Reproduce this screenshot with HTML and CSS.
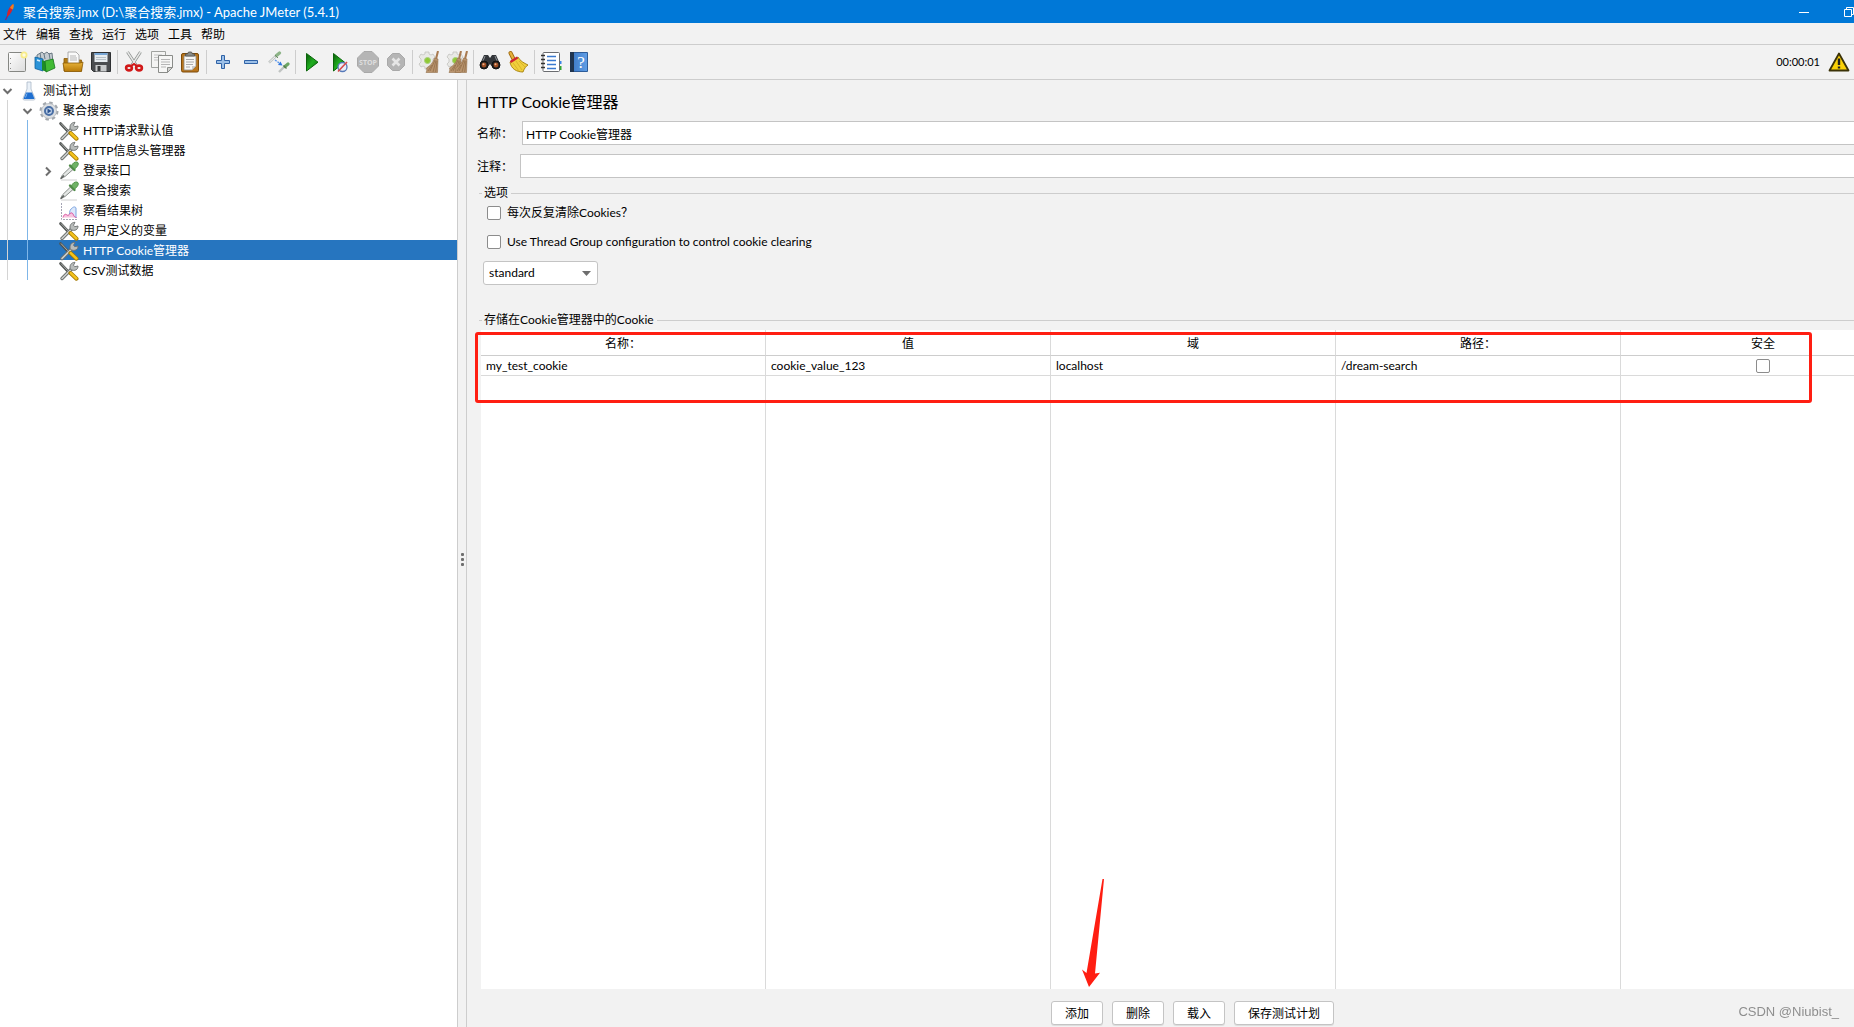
FILE: index.html
```html
<!DOCTYPE html>
<html lang="zh-CN">
<head>
<meta charset="utf-8">
<meta name="viewport" content="width=device-width, initial-scale=1">
<title>聚合搜索.jmx - Apache JMeter (5.4.1)</title>
<link rel="stylesheet" href="styles.css">
</head>
<body>
<svg class="defs" aria-hidden="true">
  <defs>
    <linearGradient id="g-green" x1="0" y1="0" x2="1" y2="1"><stop offset="0" stop-color="#0b5a0b"/><stop offset=".5" stop-color="#1fae1f"/><stop offset="1" stop-color="#0a6a0a"/></linearGradient>
    <linearGradient id="g-gold" x1="0" y1="0" x2="0" y2="1"><stop offset="0" stop-color="#e9b53c"/><stop offset="1" stop-color="#b87a08"/></linearGradient>
    <linearGradient id="g-paper" x1="0" y1="0" x2="1" y2="1"><stop offset="0" stop-color="#ffffff"/><stop offset="1" stop-color="#dcdcdc"/></linearGradient>
    <linearGradient id="g-blue" x1="0" y1="0" x2="1" y2="0"><stop offset="0" stop-color="#3a76c4"/><stop offset="1" stop-color="#5f9ee6"/></linearGradient>
    <symbol id="i-tools" viewBox="0 0 20 20">
      <path d="M1.500 2.500l9 9.500" stroke="#4f5351" stroke-width="2.600" stroke-linecap="round"/>
      <path d="M2 2.500l8 8.500" stroke="#b9bcba" stroke-width=".9"/>
      <path d="M3 17.500L13 7.500" stroke="#6d716f" stroke-width="3.400" stroke-linecap="round"/>
      <path d="M3 17.500L13 7.500" stroke="#cfd2d0" stroke-width="1.500" stroke-linecap="round"/>
      <path d="M11.500 8.500c-1.500-3.500.5-7.200 4.500-7.200l-1.500 2.900 1.200 1.500 3.300-.7c.2 3.500-3 5.700-7.500 3.500z" fill="#b9bdbb" stroke="#6d716f" stroke-width=".9"/>
      <path d="M11.500 12l6 5.700" stroke="#a47900" stroke-width="4" stroke-linecap="round"/>
      <path d="M11.800 12.200l5.600 5.300" stroke="#f4c21c" stroke-width="2.500" stroke-linecap="round"/>
    </symbol>
    <symbol id="i-dropper" viewBox="0 0 20 20">
      <path d="M2 19h16" stroke="#d0d0d0"/>
      <path d="M1.500 17.800l2-4L11.500 6l2.500 2.500-8 7z" fill="#e4e7e5" stroke="#7d827f" stroke-width=".9"/>
      <path d="M2 17.500l3-3" stroke="#5b5f5d" stroke-width="1.500"/>
      <path d="M11 4.500l4.500 4.500" stroke="#4f8a47" stroke-width="2.400" stroke-linecap="round"/>
      <path d="M12.500 5c.7-2.500 3.200-4.500 5.500-4 2.300.7 1.700 4-2.500 7.200z" fill="#6fb265" stroke="#4b8f43" stroke-width=".9"/>
    </symbol>
    <symbol id="i-gear" viewBox="0 0 22 22">
      <path d="M7 1h4v2l2 1 2-1 2 3-2 2v3l2 2-3 3-2-1-2 1v2H7v-2l-2-1-2 1-2-3 2-2V8L1 6l2-3 2 1 2-1z" fill="#e9e9e6" stroke="#c2c2be" stroke-width=".8"/>
      <circle cx="9.500" cy="9.500" r="3" fill="#8fca35" stroke="#a9cf7c"/>
    </symbol>
    <symbol id="i-besom" viewBox="0 0 22 22">
      <path d="M20 0l-2.500 10" stroke="#a87a50" stroke-width="2"/>
      <path d="M16.500 7l3.500 1-.5 13.500H8c1-2 1-3 .5-4.500C12 15 15 12 16.500 7z" fill="#b9946e" stroke="#94714b" stroke-width=".6"/>
      <path d="M17 9l-5 11M18 9.500L15 21M19 10l-1.300 11M14 14l-4 6" stroke="#8d6a45" stroke-width=".7"/>
    </symbol>
  </defs>
</svg>

<header class="titlebar">
  <svg class="feather" viewBox="0 0 14 18" fill="none" aria-hidden="true"><path d="M2.500 17l2-4" stroke="#7a2a7a" stroke-width="1.400"/><path d="M4 14c-.5-4 1.500-10 6-13 .8 4-1.500 10-6 13z" fill="#d3232f"/><path d="M7 5c1-2 2-3.500 3.500-4 .5 1.700.2 3.600-.6 5.500z" fill="#f2801e"/></svg>
  <h1 class="title">聚合搜索.jmx (D:\聚合搜索.jmx) - Apache JMeter (5.4.1)</h1>
  <div class="window-controls">
    <button type="button" aria-label="最小化"><svg viewBox="0 0 10 10"><path d="M0 5.500h10" stroke="#fff"/></svg></button>
    <button type="button" aria-label="还原"><svg viewBox="0 0 10 10" fill="none" stroke="#fff"><path d="M.5 2.500h7v7h-7zM2.500 2V.5h7v7H8"/></svg></button>
  </div>
</header>

<nav class="menubar">
  <button type="button">文件</button><button type="button">编辑</button><button type="button">查找</button><button type="button">运行</button><button type="button">选项</button><button type="button">工具</button><button type="button">帮助</button>
</nav>

<div class="toolbar" role="toolbar">
  <button type="button" aria-label="新建"><svg viewBox="0 0 22 22"><rect x="2.500" y="1.500" width="17" height="19" rx="1" fill="url(#g-paper)" stroke="#858783"/><path d="M4.500 7v1M4.500 12v1M4.500 17v1" stroke="#888"/><circle cx="18" cy="4" r="3.500" fill="#f8ec8a"/><circle cx="18" cy="4" r="1.700" fill="#fffbe0"/></svg></button>
  <button type="button" aria-label="模板"><svg viewBox="0 0 22 22"><path d="M3 4l5-3 2 2 3-2 2 2 3-1 1 9H3z" fill="#c4cbd0" stroke="#52626e" stroke-width=".8"/><path d="M6 2l1 6M10 3l1 5M15 2l1 6" stroke="#667985"/><path d="M1 6l8 2v12l-8-2.500z" fill="#2b93d8" stroke="#0c5f9e" stroke-width=".8"/><path d="M8 9l5 2v10l-5-2z" fill="#1d8d28"/><path d="M11 10l8-2 2 9-9 4z" fill="#42bb35" stroke="#16761d" stroke-width=".8"/><path d="M3 9l3 1" stroke="#d8eefc" stroke-width="1.500"/></svg></button>
  <button type="button" aria-label="打开"><svg viewBox="0 0 22 22"><path d="M2 10V7.500h5l1 1.500h11.500v11H2z" fill="#b07a14" stroke="#8a5b06" stroke-width=".8"/><path d="M6 1h8l3 3v9H6z" fill="#fafafa" stroke="#999" stroke-width=".8"/><path d="M8 5h6M8 7h7M8 9h7" stroke="#b5b5b5"/><path d="M1 12h17l3-1-1.500 9.500h-17z" fill="url(#g-gold)" stroke="#8a5b06" stroke-width=".8"/></svg></button>
  <button type="button" aria-label="保存"><svg viewBox="0 0 22 22"><path d="M1.500 1.500h19v19h-17l-2-2z" fill="#4a4d50" stroke="#2e3032"/><path d="M4.500 2h13v9h-13z" fill="#e6ecf0"/><path d="M4.500 2h13v2h-13z" fill="#76a5d4"/><path d="M6 6.500h10M6 8.500h10" stroke="#b7c0c6"/><path d="M5.500 14h11v6.500h-11z" fill="#c8cbcc"/><path d="M7.500 15h3v5h-3z" fill="#3a3c3e"/></svg></button>
  <span class="sep"></span>
  <button type="button" aria-label="剪切"><svg viewBox="0 0 22 22" fill="none"><path d="M4.500 1l8.500 13M17.500 1L9 14" stroke="#8b8f8d" stroke-width="3"/><path d="M4.500 1l8.500 13M17.500 1L9 14" stroke="#e8e9e8" stroke-width="1.400"/><ellipse cx="6" cy="17" rx="2.900" ry="2.400" stroke="#d11919" stroke-width="2.600"/><ellipse cx="16" cy="17" rx="2.900" ry="2.400" stroke="#d11919" stroke-width="2.600"/><path d="M8 15l3-2 3 2" stroke="#d11919" stroke-width="2"/></svg></button>
  <button type="button" aria-label="复制"><svg viewBox="0 0 22 22"><path d="M.5.500h14v16H.5z" fill="#f4f4f3" stroke="#a0a29f"/><path d="M3 4h8M3 6.500h8M3 9h4" stroke="#c2c2c2"/><path d="M7.500 4.500h14v12l-5 5h-9z" fill="#f6f6f5" stroke="#8a8c89"/><path d="M10 8.500h9M10 11h9M10 13.500h9M10 16h5" stroke="#b5b5b5"/><path d="M16.500 21.500v-5h5z" fill="#d2d2d0" stroke="#8a8c89"/></svg></button>
  <button type="button" aria-label="粘贴"><svg viewBox="0 0 22 22"><rect x="2.500" y="2.500" width="17" height="18.500" rx="1.500" fill="#b9761d" stroke="#7c4b0a"/><path d="M5 5h12v10l-4 4H5z" fill="#f7f7f5" stroke="#8b8b86" stroke-width=".8"/><path d="M7 8.500h8M7 11h8M7 13.500h7M7 16h4" stroke="#aaa"/><path d="M13 19v-4h4z" fill="#ccc"/><path d="M6.500 5V3h2l1-2h3l1 2h2v2z" fill="#8b8d89" stroke="#50524f" stroke-width=".8"/></svg></button>
  <span class="sep"></span>
  <button type="button" aria-label="展开"><svg viewBox="0 0 22 22"><path d="M9.500 4.500h3v5h5v3h-5v5h-3v-5h-5v-3h5z" fill="#9cc0e8" stroke="#2f62a6"/></svg></button>
  <button type="button" aria-label="折叠"><svg viewBox="0 0 22 22"><path d="M4.500 9.500h13v3h-13z" fill="#9cc0e8" stroke="#2f62a6"/></svg></button>
  <button type="button" aria-label="切换"><svg viewBox="0 0 22 22" fill="none"><path d="M1 11.500l7-6.500" stroke="#c0c4c2" stroke-width="2.400"/><path d="M1.500 11l6-5.500" stroke="#f3f4f3"/><path d="M8.500 4.500l3-2.500" stroke="#8db487" stroke-width="3.200" stroke-linecap="round"/><path d="M7 4l3 3" stroke="#6b8b67"/><path d="M11 21l5-5" stroke="#c0c4c2" stroke-width="2.400"/><path d="M17 15.500l3-2.500" stroke="#6ca564" stroke-width="3.200" stroke-linecap="round"/><path d="M15.500 14.500l3 3" stroke="#55794f" stroke-width="1.300"/><path d="M7 9l5 3.500" stroke="#5c97ea" stroke-width="1.300" stroke-dasharray="2 1"/><path d="M14.500 14.500l-4.500-.5 2.500-3.500z" fill="#2f76e0"/></svg></button>
  <span class="sep"></span>
  <button type="button" aria-label="启动"><svg viewBox="0 0 22 22"><path d="M5.500 2.500v17.500L17 11.200z" fill="url(#g-green)" stroke="#0b650b"/></svg></button>
  <button type="button" aria-label="不停顿开始"><svg viewBox="0 0 22 22"><path d="M4.500 2.500v17.500L15.500 11.200z" fill="url(#g-green)" stroke="#0b650b"/><circle cx="13.500" cy="16" r="4.500" fill="#e9eef8" stroke="#5679b8" stroke-width="1.300"/><path d="M9 20.500l9-9.500" stroke="#d84a4a" stroke-width="1.600"/></svg></button>
  <button type="button" aria-label="停止" disabled><svg viewBox="0 0 22 22"><path d="M7 .5h8L21.500 7v8L15 21.500H7L.5 15V7z" fill="#b5b5b5" stroke="#a9a9a9"/><text class="stop-text" x="11" y="14" text-anchor="middle">STOP</text></svg></button>
  <button type="button" aria-label="关闭" disabled><svg viewBox="0 0 22 22"><path d="M7.500 2.500h7l5 5v7l-5 5h-7l-5-5v-7z" fill="#b5b5b5" stroke="#a9a9a9"/><path d="M7.500 7.500l7 7M14.500 7.500l-7 7" stroke="#e6e6e6" stroke-width="2.600"/></svg></button>
  <span class="sep"></span>
  <button type="button" aria-label="清除"><svg viewBox="0 0 22 22"><use href="#i-gear"/><use href="#i-besom"/></svg></button>
  <button type="button" aria-label="清除全部"><svg viewBox="0 0 22 22"><use href="#i-gear"/><use href="#i-besom" x="-5"/><use href="#i-besom" x="1"/></svg></button>
  <span class="sep"></span>
  <button type="button" aria-label="搜索"><svg viewBox="0 0 22 22"><path d="M5 4h4l2 3 2-3h4l4 9-3 4h-4l-3-4-3 4H4l-3-4z" fill="#33363a"/><path d="M6 5l-2 5M16 5l2 5" stroke="#8b9096"/><circle cx="5" cy="14" r="4" fill="#222" stroke="#111"/><circle cx="17" cy="14" r="4" fill="#222" stroke="#111"/><circle cx="5" cy="14" r="2.400" fill="#a04d22"/><circle cx="17" cy="14" r="2.400" fill="#a04d22"/><circle cx="4.500" cy="13.300" r="1" fill="#e9b08c"/><circle cx="16.500" cy="13.300" r="1" fill="#e9b08c"/></svg></button>
  <button type="button" aria-label="重置搜索"><svg viewBox="0 0 22 22"><path d="M3.500 2l3 6" stroke="#a06a10" stroke-width="4" stroke-linecap="round"/><path d="M3.500 2l3 6" stroke="#e6b23a" stroke-width="2.200" stroke-linecap="round"/><path d="M3 11l8-5c2 4 6 6 10 8-2 1-4 4-5 7-6 0-12-3-13-10z" fill="#f0cf3c" stroke="#a57f0a" stroke-width=".9"/><path d="M6 12l6 8M9 10l6 9M12 10l6 6" stroke="#d9b52a"/><path d="M3.500 11l7-4.500" stroke="#cf2430" stroke-width="2.400"/></svg></button>
  <span class="sep"></span>
  <button type="button" aria-label="函数助手"><svg viewBox="0 0 22 22"><path d="M16 10h5.500v3H16z" fill="#3c86e8"/><path d="M16 15h5.500v4H16z" fill="#31a631"/><rect x="3" y="1.500" width="16.500" height="19" rx="1" fill="#fff" stroke="#6a6c70"/><path d="M7 5.500h9M7 9.500h9M7 13.500h9M7 17.500h9" stroke="#3a79cf" stroke-width="1.300"/><path d="M1 4.500h4M1 8.500h4M1 12.500h4M1 16.500h4" stroke="#333" stroke-width="1.300"/></svg></button>
  <button type="button" aria-label="帮助"><svg viewBox="0 0 22 22"><path d="M2.500 1.500h17v19h-17z" fill="url(#g-blue)" stroke="#2d5c99"/><path d="M2 1h4v20H2z" fill="#20344f"/><text class="help-text" x="13" y="17" text-anchor="middle">?</text></svg></button>
  <div class="status">
    <span>00:00:01</span>
    <button type="button" aria-label="日志警告"><svg viewBox="0 0 22 20"><path d="M11 1.500L20.500 18.500h-19z" fill="#fbd106" stroke="#3b3207" stroke-width="1.800" stroke-linejoin="round"/><path d="M11 6.500v6.500" stroke="#222" stroke-width="2.400"/><path d="M11 14.500v2" stroke="#222" stroke-width="2.400"/></svg></button>
  </div>
</div>

<main class="workspace">
  <aside class="tree-pane">
    <ul class="tree" role="tree">
      <li role="treeitem" aria-expanded="true">
        <a class="node level-0" href="#plan"><svg class="chev" viewBox="0 0 11 11"><path d="M1.500 3l4 4 4-4"/></svg><svg class="node-icon" viewBox="0 0 20 20"><path d="M8 1h4v7l4 9.500c0 1-.5 1.500-1.500 1.500h-9C4.500 19 4 18.500 4 17.500L8 8z" fill="#eaf1f8" stroke="#a9b8c6" stroke-width=".8"/><path d="M7 11.500h6l2.500 6.500h-11z" fill="#1f6fd0"/><path d="M8 12.500l-1.500 4" stroke="#7eb4ee"/></svg>测试计划</a>
        <ul class="children guide-grey">
          <li role="treeitem" aria-expanded="true">
            <a class="node level-1" href="#group"><svg class="chev" viewBox="0 0 11 11"><path d="M1.500 3l4 4 4-4"/></svg><svg class="node-icon" viewBox="0 0 20 20"><circle cx="10" cy="10" r="8.200" fill="none" stroke="#a3a8ad" stroke-width="2.600" stroke-dasharray="3.400 3.040"/><circle cx="10" cy="10" r="7.500" fill="#dcdfe2" stroke="#b4b8bc" stroke-width=".8"/><circle cx="10" cy="10" r="4" fill="#c3d4ea" stroke="#4a6fa5" stroke-width="2"/><path d="M8.500 7.500v5l4-2.500z" fill="#2b5390"/></svg>聚合搜索</a>
            <ul class="children guide-blue">
              <li role="treeitem"><a class="node level-2" href="#n1"><span class="chev"></span><svg class="node-icon"><use href="#i-tools"/></svg>HTTP请求默认值</a></li>
              <li role="treeitem"><a class="node level-2" href="#n2"><span class="chev"></span><svg class="node-icon"><use href="#i-tools"/></svg>HTTP信息头管理器</a></li>
              <li role="treeitem" aria-expanded="false"><a class="node level-2" href="#n3"><svg class="chev" viewBox="0 0 11 11"><path d="M4 1.500l4 4-4 4"/></svg><svg class="node-icon"><use href="#i-dropper"/></svg>登录接口</a></li>
              <li role="treeitem"><a class="node level-2" href="#n4"><span class="chev"></span><svg class="node-icon"><use href="#i-dropper"/></svg>聚合搜索</a></li>
              <li role="treeitem"><a class="node level-2" href="#n5"><span class="chev"></span><svg class="node-icon" viewBox="0 0 20 20"><path d="M2.500 2v16.500H18" fill="none" stroke="#a5a5b5" stroke-dasharray="2 1"/><path d="M10 15c1-2 0-5 2-7s4-3 5-1v10" fill="#dbe8fb" stroke="#7aa3e0"/><path d="M4 16.500c1-3 2-4 4-2.500s3-3 5-2 1 4 4.500 4.500" fill="#f6c3de" stroke="#d94f9f"/></svg>察看结果树</a></li>
              <li role="treeitem"><a class="node level-2" href="#n6"><span class="chev"></span><svg class="node-icon"><use href="#i-tools"/></svg>用户定义的变量</a></li>
              <li role="treeitem" aria-selected="true"><a class="node level-2 selected" href="#n7"><span class="chev"></span><svg class="node-icon"><use href="#i-tools"/></svg>HTTP Cookie管理器</a></li>
              <li role="treeitem"><a class="node level-2" href="#n8"><span class="chev"></span><svg class="node-icon"><use href="#i-tools"/></svg>CSV测试数据</a></li>
            </ul>
          </li>
        </ul>
      </li>
    </ul>
  </aside>
  <div class="splitter" role="separator"><i></i><i></i><i></i></div>

  <section class="editor">
    <h2 class="heading">HTTP Cookie管理器</h2>
    <div class="field name-field"><label for="name">名称：</label><input id="name" type="text" value="HTTP Cookie管理器"></div>
    <div class="field comment-field"><label for="comment">注释：</label><input id="comment" type="text"></div>

    <section class="group">
      <h3 class="group-title">选项</h3>
      <div class="options">
        <label class="check"><input type="checkbox">每次反复清除Cookies？</label>
        <label class="check"><input type="checkbox">Use Thread Group configuration to control cookie clearing</label>
        <div class="combo">
          <select aria-label="Cookie policy"><option>standard</option></select>
          <svg viewBox="0 0 9 5" aria-hidden="true"><path d="M0 0h9L4.500 5z" fill="#6e6e6e"/></svg>
        </div>
      </div>
    </section>

    <section class="group cookies">
      <h3 class="group-title">存储在Cookie管理器中的Cookie</h3>
      <div class="table-wrap">
        <table>
          <thead><tr><th>名称：</th><th>值</th><th>域</th><th>路径：</th><th>安全</th></tr></thead>
          <tbody>
            <tr class="row"><td>my_test_cookie</td><td>cookie_value_123</td><td>localhost</td><td>/dream-search</td><td class="secure"><input type="checkbox" aria-label="安全"></td></tr>
            <tr class="rest"><td></td><td></td><td></td><td></td><td></td></tr>
          </tbody>
        </table>
        <div class="highlight"></div>
      </div>
      <div class="actions">
        <button type="button" class="btn">添加<svg class="arrow" viewBox="0 0 22 108" aria-hidden="true"><path d="M20.500 0H22L13 94.500l5-.8L7 108 0 90.500l4.500 3.500z" fill="#ff1e12"/></svg></button>
        <button type="button" class="btn">删除</button>
        <button type="button" class="btn">载入</button>
        <button type="button" class="btn">保存测试计划</button>
      </div>
    </section>
  </section>
</main>
<div class="watermark">CSDN @Niubist_</div>
</body>
</html>
```
FILE: styles.css
```css
* { box-sizing: border-box; }

:root {
  --line: #cdcdcd;
  --panel: #f2f2f2;
  --red: #ff1e12;
  --overhang: 52px;
}

body {
  margin: 0;
  height: 100vh;
  display: flex;
  flex-direction: column;
  overflow: hidden;
  background: var(--panel);
  color: #000;
  font: 12px/20px Lato, "Noto Sans CJK SC", sans-serif;
}

button, input, select { font: inherit; color: inherit; }
button { margin: 0; padding: 0; border: 0; background: none; }
h1, h2, h3, ul { margin: 0; padding: 0; font-weight: 400; }
ul { list-style: none; }
svg { display: block; }
.defs { position: absolute; width: 0; height: 0; }

/* title bar */
.titlebar {
  flex: none;
  display: flex;
  align-items: center;
  height: 23px;
  padding-left: 3px;
  overflow: hidden;
  background: #0078d7;
  color: #fff;
}
.feather { width: 14px; height: 18px; margin-right: 6px; }
.title { flex: 1; font-size: 13px; line-height: 22px; white-space: nowrap; }
.window-controls { display: flex; gap: 35px; height: 20px; }
.window-controls svg { width: 10px; height: 10px; }

/* menu */
.menubar {
  flex: none;
  display: flex;
  gap: 9px;
  height: 22px;
  padding: 2px 0 0 3px;
  border-bottom: 1px solid var(--line);
}
.menubar button { line-height: 18px; }

/* toolbar */
.toolbar {
  flex: none;
  display: flex;
  align-items: center;
  height: 35px;
  padding-left: 3px;
  border-bottom: 1px solid var(--line);
}
.toolbar > button { flex: none; width: 28px; padding: 0 3px; }
.toolbar > button svg { width: 22px; height: 22px; }
.sep { flex: none; width: 1px; height: 24px; margin: 0 2px; background: var(--line); }
.stop-text { font: 700 7px "Open Sans", sans-serif; fill: #dedede; }
.help-text { font: 17px "Liberation Serif", serif; fill: #fff; }
.status { display: flex; align-items: center; gap: 8px; margin-left: auto; padding-right: 4px; font-size: 11px; }
.status svg { width: 22px; height: 20px; }

/* workspace */
.workspace { flex: 1; display: flex; min-height: 0; }
.tree-pane { flex: none; width: 457px; background: #fff; }
.children { position: relative; }
.children::before {
  content: "";
  position: absolute;
  top: 0;
  bottom: 0;
  width: 1px;
  z-index: 1;
}
.guide-grey::before { left: 7px; background: #d4d4d4; }
.guide-blue::before { left: 27px; background: #7fb6e8; }
.node {
  display: flex;
  align-items: center;
  gap: 3px;
  height: 20px;
  padding-top: 2px;
  color: #000;
  text-decoration: none;
  white-space: nowrap;
}
.level-0 { padding-left: 2px; }
.level-1 { padding-left: 22px; }
.level-2 { padding-left: 42px; }
.selected { background: #2675bf; color: #fff; }
.chev { width: 11px; height: 11px; margin-right: 2px; fill: none; stroke: #6e6e6e; stroke-width: 2; }
.node-icon { width: 22px; height: 20px; fill: none; }

.splitter {
  flex: none;
  display: flex;
  flex-direction: column;
  align-items: center;
  justify-content: center;
  gap: 2px;
  width: 10px;
  padding-top: 12px;
  border: 1px solid var(--line);
  border-width: 0 1px;
}
.splitter i { width: 3px; height: 3px; border-radius: 1px; background: #6e6e6e; }

/* editor: the window runs past the right edge of the screen */
.editor {
  flex: 1;
  display: flex;
  flex-direction: column;
  min-width: 0;
  margin-right: calc(-1 * var(--overhang));
  padding: 10px 0 2px 10px;
}
.heading { font-size: 16px; line-height: 24px; }
.field { display: flex; align-items: center; height: 24px; }
.field label { flex: none; padding-top: 2px; }
.name-field { margin-top: 7px; }
.comment-field { margin-top: 9px; }
.name-field label { width: 45px; }
.comment-field label { width: 43px; }
.field input {
  flex: 1;
  min-width: 0;
  height: 24px;
  padding: 0 3px;
  border: 1px solid #c4c4c4;
  background: #fff;
  outline: 0;
}

.group { display: flex; flex-direction: column; margin: 5px 0 0 2px; }
.group-title { display: flex; align-items: center; gap: 3px; font-size: 12px; line-height: 20px; }
.group-title::before, .group-title::after { content: ""; height: 1px; background: var(--line); }
.group-title::before { width: 3px; margin-right: -1px; }
.group-title::after { flex: 1; }
.options { display: flex; flex-direction: column; align-items: flex-start; padding-left: 4px; }
.check { display: flex; align-items: center; gap: 6px; height: 20px; margin-bottom: 9px; padding-left: 4px; }
input[type="checkbox"] {
  appearance: none;
  width: 14px;
  height: 14px;
  margin: 0;
  border: 1px solid #8c8c8c;
  border-radius: 2px;
  background: #fff;
}
.combo { display: grid; align-items: center; width: 115px; }
.combo select {
  grid-area: 1 / 1;
  height: 24px;
  padding: 0 5px;
  appearance: none;
  border: 1px solid #c4c4c4;
  border-radius: 3px;
  background: #fff;
}
.combo svg { grid-area: 1 / 1; justify-self: end; width: 9px; height: 5px; margin-right: 7px; pointer-events: none; }

.cookies { flex: 1; min-height: 0; margin-top: 25px; }
.table-wrap { position: relative; flex: 1; display: grid; min-height: 0; padding-left: 2px; }
table { width: 100%; height: 100%; table-layout: fixed; border-collapse: separate; border-spacing: 0; background: #fff; }
th, td { padding: 0 5px; border-right: 1px solid #dadada; text-align: left; font-weight: 400; line-height: 18px; }
th { height: 26px; padding-top: 2px; text-align: center; border-bottom: 1px solid var(--line); }
.row td { height: 20px; border-bottom: 1px solid #dadada; }
.row .secure { text-align: center; }
.secure input { display: block; margin: 0 auto; }
.highlight {
  position: absolute;
  left: -4px;
  top: 2px;
  right: 94px;
  height: 71px;
  border: 3px solid var(--red);
  border-radius: 3px;
  pointer-events: none;
}

.actions { display: flex; justify-content: center; gap: 9px; padding-top: 12px; }
.btn {
  position: relative;
  height: 24px;
  padding: 1px 13px 0;
  border: 1px solid #c4c4c4;
  border-radius: 3px;
  background: #fff;
  box-shadow: 0 1px 0 #dedede;
}
.arrow { position: absolute; left: 30px; bottom: 37px; width: 22px; height: 108px; }

.watermark {
  position: fixed;
  right: 15px;
  bottom: 5px;
  color: #8e8e8e;
  font: 13px/20px "Liberation Sans", sans-serif;
}
```
